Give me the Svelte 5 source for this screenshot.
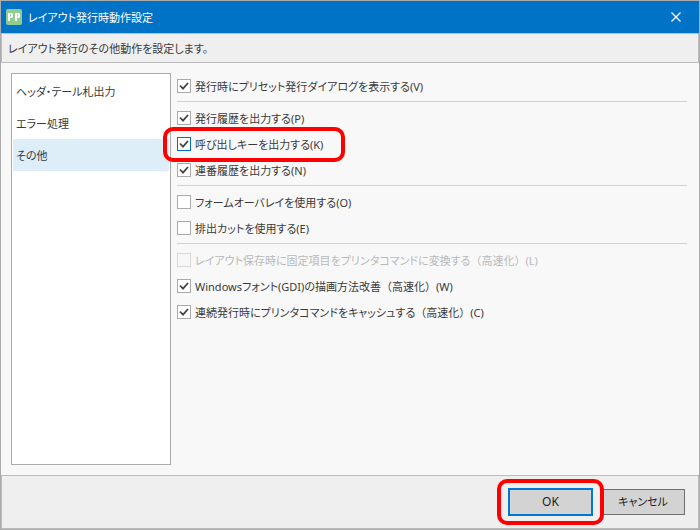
<script lang="ts">
  type Option = {
    label: string;
    note?: string;
    key: string;
    checked: boolean;
    disabled?: boolean;
    marked?: boolean;
  };

  const pages = ["ヘッダ・テール札出力", "エラー処理", "その他"];

  let current = $state(2);

  let groups: Option[][] = $state([
    [{ label: "発行時にプリセット発行ダイアログを表示する", key: "V", checked: true }],
    [
      { label: "発行履歴を出力する", key: "P", checked: true },
      { label: "呼び出しキーを出力する", key: "K", checked: true, marked: true },
      { label: "連番履歴を出力する", key: "N", checked: true },
    ],
    [
      { label: "フォームオーバレイを使用する", key: "O", checked: false },
      { label: "排出カットを使用する", key: "E", checked: false },
    ],
    [
      {
        label: "レイアウト保存時に固定項目をプリンタコマンドに変換する",
        note: "（高速化）",
        key: "L",
        checked: false,
        disabled: true,
      },
      {
        label: "Windowsフォント(GDI)の描画方法改善",
        note: "（高速化）",
        key: "W",
        checked: true,
      },
      {
        label: "連続発行時にプリンタコマンドをキャッシュする",
        note: "（高速化）",
        key: "C",
        checked: true,
      },
    ],
  ]);
</script>

<div class="dialog">
  <header class="titlebar">
    <svg class="logo" width="16" height="16" viewBox="0 0 16 16" aria-hidden="true">
      <rect width="16" height="16" rx="2" fill="#8fcd8f" />
      <path
        d="M2 4h4l1 1v3l-1 1H4v3H2zM4 5.5v2h1v-2zM9 4h4l1 1v3l-1 1h-2v3H9zM11 5.5v2h1v-2z"
        fill="#fff"
        fill-rule="evenodd"
      />
    </svg>
    <h1>レイアウト発行時動作設定</h1>
    <button class="close" aria-label="閉じる">
      <svg width="10" height="10" viewBox="0 0 10 10">
        <path d="M0.5 0.5l9 9M9.5 0.5l-9 9" stroke="#fff" stroke-width="1.3" />
      </svg>
    </button>
  </header>

  <p class="description">レイアウト発行のその他動作を設定します。</p>

  <main class="content">
    <nav class="pages">
      {#each pages as page, i}
        <button
          class="page"
          class:selected={i === current}
          onclick={() => (current = i)}>{page}</button
        >
      {/each}
    </nav>

    <div class="options">
      {#each groups as group}
        <div class="group">
          {#each group as option}
            <div class="row">
              <label
                class="option"
                class:disabled={option.disabled}
                class:marked={option.marked}
              >
                <span class="box">
                  <input
                    type="checkbox"
                    bind:checked={option.checked}
                    disabled={option.disabled}
                  />
                  <svg class="tick" width="14" height="14" viewBox="0 0 14 14">
                    <path d="M3 6.5l3 3.2L11 4" />
                  </svg>
                </span>
                <span class="text"
                  >{option.label}{#if option.note}<span class="note"
                      >{option.note}</span
                    >{/if}({option.key})</span
                >
              </label>
            </div>
          {/each}
        </div>
      {/each}
    </div>
  </main>

  <footer class="actions">
    <span class="ok-mark"><button class="btn primary">OK</button></span>
    <button class="btn">キャンセル</button>
  </footer>
</div>

<style>
  :global(body) {
    margin: 0;
  }

  .dialog {
    display: flex;
    flex-direction: column;
    box-sizing: border-box;
    min-height: 100vh;
    border: 1px solid #ababab;
    background: #f8f8f8;
    color: #3a3a3a;
    font-family: "Noto Sans", "Noto Sans CJK JP", sans-serif;
    font-size: 11px;
    line-height: 18px;
    font-feature-settings: "palt";
  }

  button {
    font: inherit;
    font-feature-settings: inherit;
    color: inherit;
  }

  .titlebar {
    display: flex;
    align-items: center;
    height: 32px;
    padding-left: 5px;
    background: #0173c7;
    color: #fff;
  }

  .logo {
    margin-right: 6px;
  }

  h1 {
    flex: 1;
    margin: 0;
    padding-top: 2px;
    font-size: 11px;
    font-weight: 400;
  }

  .close {
    display: flex;
    align-items: center;
    justify-content: center;
    width: 46px;
    height: 32px;
    padding: 0;
    border: 0;
    background: none;
  }

  .description {
    margin: 0;
    padding: 6px 6px 4px;
    border: 1px solid #bcbcbc;
    background: #efefef;
  }

  .content {
    display: flex;
    flex: 1;
    gap: 6px;
    padding: 10px 12px 10px 10px;
  }

  .pages {
    box-sizing: border-box;
    flex: 0 0 160px;
    padding: 1px;
    border: 1px solid #ababab;
    background: #fff;
  }

  .page {
    display: block;
    width: 100%;
    height: 32px;
    padding: 2px 3px 0;
    border: 0;
    background: none;
    text-align: left;
  }

  .page.selected {
    background: #deeef9;
  }

  .options {
    flex: 1;
    min-width: 0;
  }

  .group + .group {
    margin-top: 2px;
    padding-top: 3px;
    border-top: 1px solid #d2d2d2;
  }

  .row {
    display: flex;
    align-items: center;
    height: 26px;
  }

  .option {
    position: relative;
    display: flex;
    align-items: center;
    gap: 4px;
    white-space: nowrap;
  }

  .option.disabled {
    color: #b8b8b8;
  }

  .text {
    padding-top: 2px;
  }

  .note {
    font-feature-settings: normal;
  }

  .box {
    position: relative;
    display: flex;
  }

  .box input {
    appearance: none;
    width: 14px;
    height: 14px;
    margin: 0;
    border: 1px solid #ababab;
    background: #fff;
  }

  .box input:disabled {
    border-color: #dadada;
    background: #f8f8f8;
  }

  .marked .box input {
    border-color: #0173c7;
  }

  .tick {
    position: absolute;
    inset: 0;
    display: none;
    fill: none;
    stroke: #444;
    stroke-width: 1.8;
    pointer-events: none;
  }

  input:checked + .tick {
    display: block;
  }

  /* red call-out rings */
  .marked::after,
  .ok-mark::after {
    content: "";
    position: absolute;
    border: 4px solid #f00;
    border-radius: 10px;
    pointer-events: none;
  }

  .marked::after {
    inset: -7px -22px -8px -14px;
  }

  .ok-mark::after {
    inset: -9px -11px;
  }

  .actions {
    display: flex;
    justify-content: flex-end;
    align-items: center;
    gap: 8px;
    padding: 12px 13px;
    border: 1px solid #bcbcbc;
    background: #efefef;
  }

  .ok-mark {
    position: relative;
    z-index: 1;
    display: flex;
  }

  .btn {
    width: 84px;
    height: 26px;
    padding: 0;
    border: 1px solid #707070;
    background: #d3d3d3;
    color: #222;
  }

  .btn.primary {
    width: 85px;
    height: 28px;
    border: 2px solid #0078d7;
    font-size: 12px;
  }
</style>
